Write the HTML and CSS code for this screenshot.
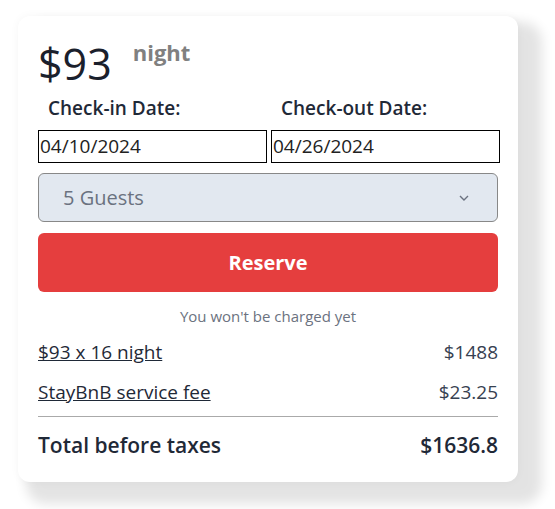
FILE: index.html
```html
<!DOCTYPE html>
<html>
<head>
<meta charset="utf-8">
<link rel="stylesheet" href="styles.css">
</head>
<body>
<div class="card">
  <div class="price">
    <span class="amount">$93</span>
    <span class="unit">night</span>
  </div>
  <div class="dates">
    <div class="field">
      <label class="label">Check-in Date:</label>
      <div class="date-input">04/10/2024</div>
    </div>
    <div class="field">
      <label class="label">Check-out Date:</label>
      <div class="date-input">04/26/2024</div>
    </div>
  </div>
  <div class="select">
    <span class="select-text">5 Guests</span>
    <svg class="chevron" width="10" height="6" viewBox="0 0 10 6"><path d="M1 1l4 4 4-4" fill="none" stroke="#6b7280" stroke-width="1.4"/></svg>
  </div>
  <button class="reserve">Reserve</button>
  <p class="note">You won't be charged yet</p>
  <div class="row">
    <a class="link">$93 x 16 night</a>
    <span class="val">$1488</span>
  </div>
  <div class="row">
    <a class="link">StayBnB service fee</a>
    <span class="val">$23.25</span>
  </div>
  <div class="divider"></div>
  <div class="row total">
    <span>Total before taxes</span>
    <span>$1636.8</span>
  </div>
</div>
</body>
</html>
```
FILE: styles.css
```css
html, body {
  margin: 0;
  background: #ffffff;
}
body {
  padding: 16px 0 28px 18px;
  font-family: "Open Sans", "Noto Sans", sans-serif;
  color: #1f2937;
}
.card {
  width: 460px;
  padding: 20px 20px 23px;
  background: #fff;
  border-radius: 12px;
  box-shadow: 16px 14px 12px 8px rgba(0,0,0,0.11), 0 0 10px rgba(0,0,0,0.04);
}
.price {
  display: flex;
  align-items: flex-start;
  gap: 21px;
  height: 56px;
}
.amount {
  font-size: 43px;
  line-height: 56px;
  color: #1a202c;
}
.unit {
  font-size: 22px;
  font-weight: 700;
  color: #808080;
  line-height: 32px;
}
.dates {
  display: grid;
  grid-template-columns: 229px 229px;
  column-gap: 4px;
  margin-top: 4px;
}
.field {
  display: flex;
  flex-direction: column;
}
.label {
  font-size: 19px;
  font-weight: 600;
  line-height: 24px;
  margin-left: 10px;
  margin-bottom: 10px;
  color: #1f2937;
}
.date-input {
  height: 31px;
  border: 1px solid #000;
  font-size: 19px;
  line-height: 31px;
  padding-left: 1px;
  color: #222;
}
.select {
  margin-top: 10px;
  height: 47px;
  border: 1px solid #888;
  border-radius: 6px;
  background: #e2e8f0;
  display: flex;
  align-items: center;
  justify-content: space-between;
  padding: 0 28px 0 24px;
}
.select-text {
  font-size: 20px;
  color: #6b7280;
}
.reserve {
  display: block;
  width: 100%;
  margin-top: 11px;
  height: 59px;
  border: 0;
  border-radius: 6px;
  background: #e53e3e;
  color: #fff;
  font-family: inherit;
  font-size: 20px;
  font-weight: 700;
}
.note {
  margin: 14px 0 0;
  text-align: center;
  font-size: 15px;
  line-height: 20px;
  color: #6b7280;
}
.row {
  display: flex;
  justify-content: space-between;
  font-size: 19px;
  line-height: 28px;
  margin-top: 12px;
  color: #374151;
}
.link {
  text-decoration: underline;
  color: #1f2937;
}
.divider {
  margin-top: 10px;
  border-top: 1px solid #aaa;
}
.row.total {
  font-size: 21px;
  font-weight: 600;
  color: #1f2937;
  margin-top: 14px;
}
```
